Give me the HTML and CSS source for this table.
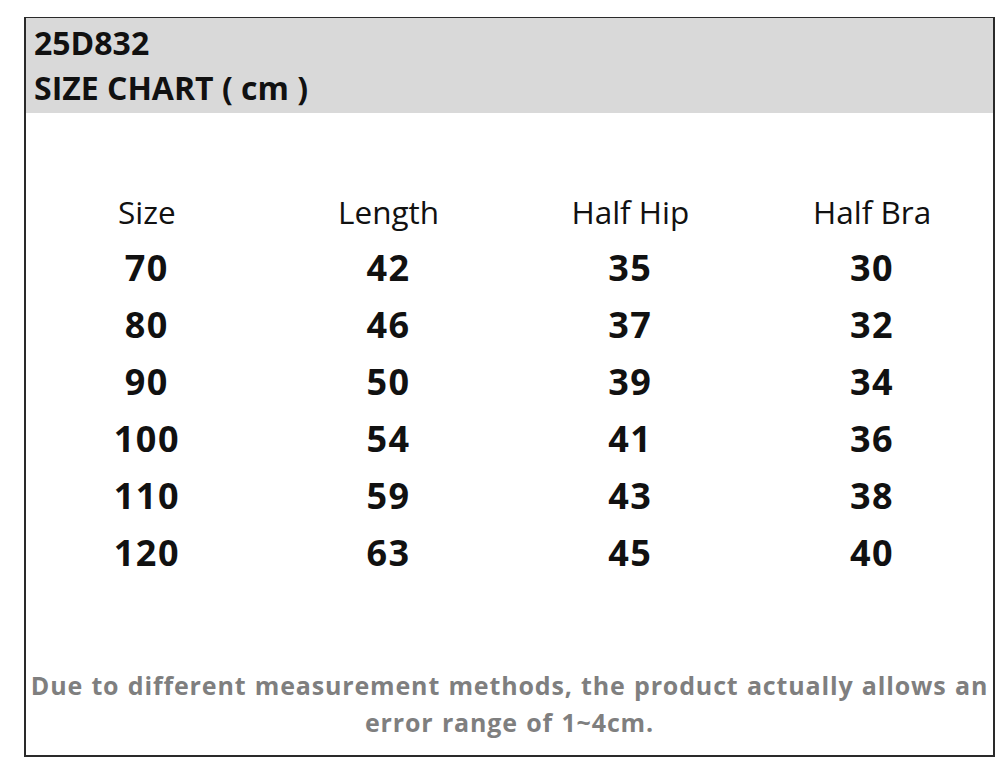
FILE: index.html
```html
<!DOCTYPE html>
<html>
<head>
<meta charset="utf-8">
<link rel="stylesheet" href="styles.css">
</head>
<body>
<div class="frame">
  <div class="head">
    <div class="head-line">25D832</div>
    <div class="head-line">SIZE CHART ( cm )</div>
  </div>
  <div class="chart">
    <div class="row th"><span>Size</span><span>Length</span><span>Half Hip</span><span>Half Bra</span></div>
    <div class="row"><span>70</span><span>42</span><span>35</span><span>30</span></div>
    <div class="row"><span>80</span><span>46</span><span>37</span><span>32</span></div>
    <div class="row"><span>90</span><span>50</span><span>39</span><span>34</span></div>
    <div class="row"><span>100</span><span>54</span><span>41</span><span>36</span></div>
    <div class="row"><span>110</span><span>59</span><span>43</span><span>38</span></div>
    <div class="row"><span>120</span><span>63</span><span>45</span><span>40</span></div>
  </div>
  <div class="note">Due to different measurement methods, the product actually allows an<br>error range of 1~4cm.</div>
</div>
</body>
</html>
```
FILE: styles.css
```css
html, body { margin: 0; padding: 0; background: #fff; }
body { font-family: "Open Sans", "Noto Sans", sans-serif; color: #111; }
.frame {
  margin: 17px 0 0 24px;
  width: 971px;
  height: 740px;
  box-sizing: border-box;
  border: 2px solid #2a2a2a;
  border-top-width: 1px;
  display: flex;
  flex-direction: column;
}
.head {
  background: #d9d9d9;
  height: 95px;
  padding: 2px 0 0 8px;
  box-sizing: border-box;
}
.head-line {
  font-size: 32px;
  font-weight: 700;
  line-height: 45px;
  letter-spacing: 0;
}
.chart { padding-top: 71px; }
.row {
  display: grid;
  grid-template-columns: repeat(4, 1fr);
  height: 57px;
  align-items: center;
  text-align: center;
  font-size: 36px;
  font-weight: 700;
  letter-spacing: 1.5px;
}
.row.th {
  height: 55px;
  font-size: 31.5px;
  font-weight: 400;
  letter-spacing: 0;
}
.note {
  margin-top: 86px;
  text-align: center;
  color: #7f7f7f;
  font-size: 25px;
  font-weight: 700;
  line-height: 37px;
  letter-spacing: 0.85px;
  word-spacing: 1px;
}
```
